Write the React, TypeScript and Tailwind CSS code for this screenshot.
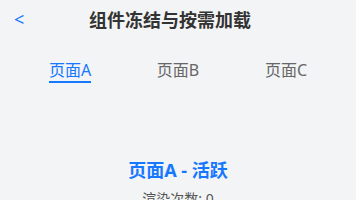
import { useState } from 'react';

const TABS = ['页面A', '页面B', '页面C'];

export default function App() {
  const [active, setActive] = useState(0);

  return (
    <div
      className="min-h-screen bg-[#f3f4f6]"
      style={{ fontFamily: '"Noto Sans", "Noto Sans CJK SC", sans-serif' }}
    >
      {/* Header */}
      <div className="relative h-10 flex items-center justify-center pr-4">
        <button className="absolute left-[14px] top-[7px] text-[#1677ff] text-[18px] leading-6">&lt;</button>
        <h1 className="text-[18px] font-bold text-[#333333] leading-6">组件冻结与按需加载</h1>
      </div>

      {/* Tabs */}
      <div className="flex px-4 mt-[20px]">
        {TABS.map((t, i) => (
          <button key={t} onClick={() => setActive(i)} className="flex-1 flex justify-center">
            <span
              className={`text-[16px] leading-5 pb-[1px] border-b-2 ${
                i === active ? 'text-[#1677ff] border-[#1677ff]' : 'text-[#666666] border-transparent'
              }`}
            >
              {t}
            </span>
          </button>
        ))}
      </div>

      {/* Content */}
      <div className="flex flex-col items-center pt-[75px]">
        <p className="text-[18px] font-bold text-[#1677ff] leading-6">{TABS[active]} - 活跃</p>
        <p className="mt-[7px] text-[14px] text-[#555555] leading-5">渲染次数: 0</p>
      </div>
    </div>
  );
}
